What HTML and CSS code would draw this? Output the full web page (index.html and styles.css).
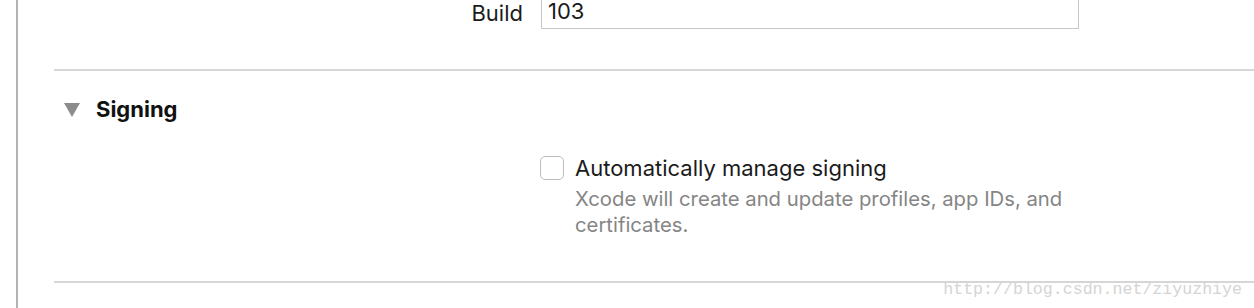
FILE: index.html
```html
<!DOCTYPE html>
<html lang="en">
<head>
  <meta charset="UTF-8" />
  <title>Signing</title>
  <link rel="stylesheet" href="styles.css">
</head>
<body>
  <div class="editor">
    <div class="form-row build-row">
      <label class="row-label" for="build">Build</label>
      <input class="text-field" id="build" type="text" value="103">
    </div>

    <div class="section">
      <div class="section-header">
        <span class="disclosure"></span>
        <h2>Signing</h2>
      </div>
      <div class="form-row">
        <span class="row-label"></span>
        <div class="option">
          <label class="check">
            <input type="checkbox">
            <span>Automatically manage signing</span>
          </label>
          <p class="hint">Xcode will create and update profiles, app IDs, and<br>certificates.</p>
        </div>
      </div>
    </div>

    <div class="section section-last"></div>

    <div class="watermark">http://blog.csdn.net/ziyuzhiye</div>
  </div>
</body>
</html>
```

FILE: styles.css
```css
html, body {
  margin: 0;
  padding: 0;
  background-color: #fff;
}
body {
  font-family: Inter, "Liberation Sans", Arial, sans-serif;
  color: #1b1b1b;
  overflow: hidden;
}
.editor {
  position: relative;
  margin-left: 16px;
  padding-left: 36px;
  border-left: 2px solid #b3b3b3;
  height: 308px;
  box-sizing: border-box;
}
.form-row {
  display: grid;
  grid-template-columns: 469px 538px;
  column-gap: 18px;
}
.row-label {
  text-align: right;
  font-size: 22px;
}
.build-row {
  align-items: center;
  height: 29px;
  margin-bottom: 40px;
}
.build-row .row-label {
  line-height: 24px;
  margin-top: -4px;
}
.text-field {
  font-family: inherit;
  font-size: 22px;
  color: #1b1b1b;
  height: 29px;
  box-sizing: border-box;
  border: 1px solid #c6c6c6;
  border-top: 0;
  padding: 0 0 6px 6px;
  margin: 0;
  outline: none;
  background: #fff;
}
.section {
  border-top: 2px solid #d6d6d6;
}
.section-header {
  display: flex;
  align-items: center;
  height: 26px;
  padding: 25px 0 0 10px;
}
.disclosure {
  width: 0;
  height: 0;
  border-left: 8.5px solid transparent;
  border-right: 8.5px solid transparent;
  border-top: 14px solid #8c8c8c;
  margin: 2px 16px 0 0;
}
.section-header h2 {
  margin: 0;
  font-size: 22px;
  font-weight: bold;
  color: #111;
}
.section .form-row {
  margin-top: 33px;
  padding-bottom: 43px;
}
.check {
  display: flex;
  align-items: center;
  height: 26px;
  font-size: 22px;
  margin-left: -1px;
}
.check input {
  appearance: none;
  -webkit-appearance: none;
  width: 24px;
  height: 24px;
  margin: 0 11px 0 0;
  border: 1px solid #bcbcbc;
  border-radius: 5px;
  background: #fff;
  box-sizing: border-box;
}
.hint {
  margin: 5px 0 0 34px;
  font-size: 20.3px;
  line-height: 26px;
  color: #858585;
}
.section-last {
  height: 0;
}
.watermark {
  position: absolute;
  right: 12px;
  bottom: 10px;
  font-family: "Liberation Mono", "DejaVu Sans Mono", monospace;
  font-size: 16.6px;
  color: #d4d4d4;
  line-height: 16px;
}
```
